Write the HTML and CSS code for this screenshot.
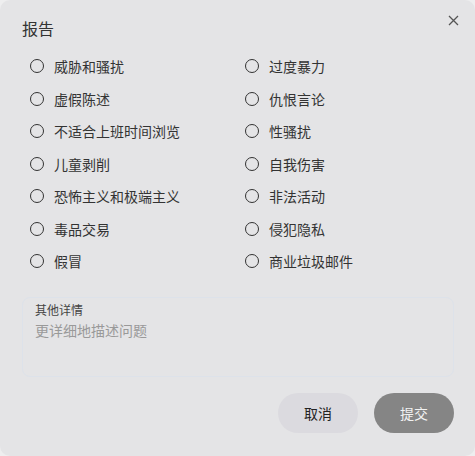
FILE: index.html
```html
<!doctype html>
<html>
<head>
<meta charset="UTF-8">
<title>报告</title>
<link rel="stylesheet" href="styles.css">
</head>
<body>
	<div class="dialog">
		<div class="header">
			<h1 class="title">报告</h1>
			<button type="button" class="close" aria-label="关闭">
				<svg width="11" height="11" viewBox="0 0 11 11"><path d="M1 1L10 10M10 1L1 10" stroke="#555" stroke-width="1.3" fill="none"/></svg>
			</button>
		</div>
		<div class="options">
			<label class="option"><span class="radio"></span>威胁和骚扰</label>
			<label class="option"><span class="radio"></span>过度暴力</label>
			<label class="option"><span class="radio"></span>虚假陈述</label>
			<label class="option"><span class="radio"></span>仇恨言论</label>
			<label class="option"><span class="radio"></span>不适合上班时间浏览</label>
			<label class="option"><span class="radio"></span>性骚扰</label>
			<label class="option"><span class="radio"></span>儿童剥削</label>
			<label class="option"><span class="radio"></span>自我伤害</label>
			<label class="option"><span class="radio"></span>恐怖主义和极端主义</label>
			<label class="option"><span class="radio"></span>非法活动</label>
			<label class="option"><span class="radio"></span>毒品交易</label>
			<label class="option"><span class="radio"></span>侵犯隐私</label>
			<label class="option"><span class="radio"></span>假冒</label>
			<label class="option"><span class="radio"></span>商业垃圾邮件</label>
		</div>
		<div class="details">
			<div class="details-label">其他详情</div>
			<div class="details-input">更详细地描述问题</div>
		</div>
		<div class="controls">
			<button type="button" class="btn btn-cancel">取消</button>
			<button type="button" class="btn btn-submit">提交</button>
		</div>
	</div>
</body>
</html>
```

FILE: styles.css
```css
body {
	margin:0;
	background:#eeeeef;
	font-family:"Noto Sans CJK SC", "Liberation Sans", sans-serif;
	color:#333;
	}

.dialog {
	height:456px;
	box-sizing:border-box;
	background:#e4e4e6;
	border-radius:10px;
	padding:16px 16px 0 22px;
	}

.header {
	display:flex;
	justify-content:space-between;
	align-items:flex-start;
	height:34px;
	}

.title {
	margin:0;
	font-size:16px;
	font-weight:normal;
	line-height:24px;
	color:#333;
	}

.close {
	border:0;
	background:none;
	padding:0;
	width:11px;
	height:11px;
	margin:-1px 0 0 0;
	cursor:pointer;
	}

.close svg {
	display:block;
	}

.options {
	display:grid;
	grid-template-columns:215px 1fr;
	grid-auto-rows:32.5px;
	padding-left:8px;
	}

.option {
	display:flex;
	align-items:center;
	gap:10px;
	font-size:14px;
	color:#333;
	}

.radio {
	width:14px;
	height:14px;
	box-sizing:border-box;
	border:1.4px solid #333;
	border-radius:50%;
	flex:none;
	}

.details {
	margin:19px 5px 0 0;
	height:80px;
	box-sizing:border-box;
	border:1px solid #dde2ea;
	border-radius:8px;
	padding:4px 12px 0;
	}

.details-label {
	font-size:12px;
	line-height:16px;
	color:#444;
	}

.details-input {
	margin-top:2px;
	font-size:14px;
	line-height:20px;
	color:#999;
	}

.controls {
	display:flex;
	justify-content:flex-end;
	gap:16px;
	margin:16px 5px 0 0;
	}

.btn {
	width:80px;
	height:40px;
	border:0;
	border-radius:20px;
	font-family:inherit;
	font-size:14px;
	}

.btn-cancel {
	background:#dbdadf;
	color:#222;
	}

.btn-submit {
	background:#858585;
	color:#f2f2f2;
	}
```
